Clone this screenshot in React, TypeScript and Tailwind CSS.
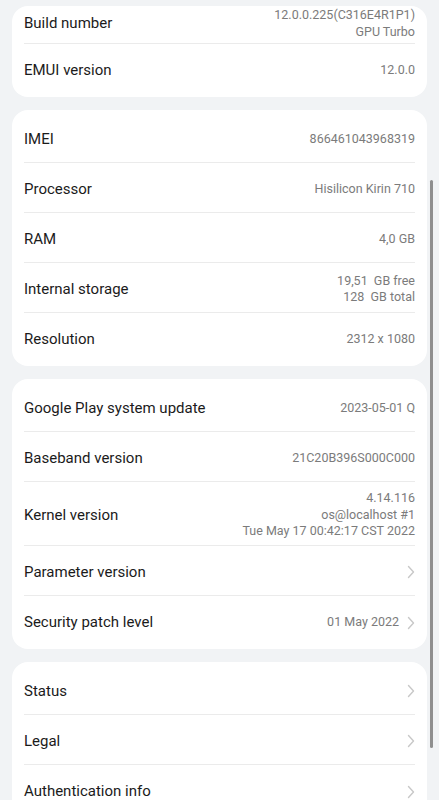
import { ReactNode } from 'react';

type Row = {
    label: string;
    value?: ReactNode;
    chevron?: boolean;
    h?: string;
};

const CARDS: Row[][] = [
    [
        { label: 'Build number', value: ['12.0.0.225(C316E4R1P1)', 'GPU Turbo'], h: 'h-[38px] pb-[5px]' },
        { label: 'EMUI version', value: '12.0.0' },
    ],
    [
        { label: 'IMEI', value: '866461043968319' },
        { label: 'Processor', value: 'Hisilicon Kirin 710' },
        { label: 'RAM', value: '4,0 GB' },
        { label: 'Internal storage', value: ['19,51  GB free', '128  GB total'] },
        { label: 'Resolution', value: '2312 x 1080' },
    ],
    [
        { label: 'Google Play system update', value: '2023-05-01 Q' },
        { label: 'Baseband version', value: '21C20B396S000C000' },
        { label: 'Kernel version', value: ['4.14.116', 'os@localhost #1', 'Tue May 17 00:42:17 CST 2022'], h: 'h-[64px]' },
        { label: 'Parameter version', chevron: true },
        { label: 'Security patch level', value: '01 May 2022', chevron: true },
    ],
    [
        { label: 'Status', chevron: true },
        { label: 'Legal', chevron: true },
        { label: 'Authentication info', chevron: true },
    ],
];

function Chevron() {
    return (
        <svg width="8" height="14" viewBox="0 0 8 14" fill="none" className="ml-2 shrink-0">
            <path d="M1.5 1.5L6.5 7L1.5 12.5" stroke="#c8c8c8" strokeWidth="1.4" strokeLinecap="round" strokeLinejoin="round" />
        </svg>
    );
}

function InfoRow({ row, last }: { row: Row; last: boolean }) {
    const lines = Array.isArray(row.value) ? row.value : row.value ? [row.value] : [];
    return (
        <div className={`flex items-center justify-between pt-[3px] ${row.h ?? 'h-[50px]'} ${last ? '' : 'border-b border-[#ebebeb]'}`}>
            <span className="text-[15px] text-[#1b1b1b]">{row.label}</span>
            <div className="flex items-center">
                {lines.length > 0 && (
                    <div className="flex flex-col items-end text-[12.5px] leading-[16.5px] text-[#7b7b7b] whitespace-pre">
                        {lines.map((l, i) => (
                            <span key={i}>{l}</span>
                        ))}
                    </div>
                )}
                {row.chevron && <Chevron />}
            </div>
        </div>
    );
}

export default function App() {
    return (
        <div className="relative h-[800px] overflow-hidden bg-[#f1f3f5] font-['Roboto',sans-serif]">
            <div className="flex flex-col gap-[13px] px-3 pt-[6px]">
                {CARDS.map((rows, ci) => (
                    <div key={ci} className={`bg-white rounded-[16px] px-3 ${ci === 0 ? 'pb-[3px]' : 'py-[3px]'}`}>
                        {rows.map((r, i) => (
                            <InfoRow key={r.label} row={r} last={i === rows.length - 1} />
                        ))}
                    </div>
                ))}
            </div>

            {/* scrollbar */}
            <div className="absolute right-[6px] top-[180px] h-[568px] w-[3px] rounded-full bg-[#8f8f8f]" />
        </div>
    );
}
